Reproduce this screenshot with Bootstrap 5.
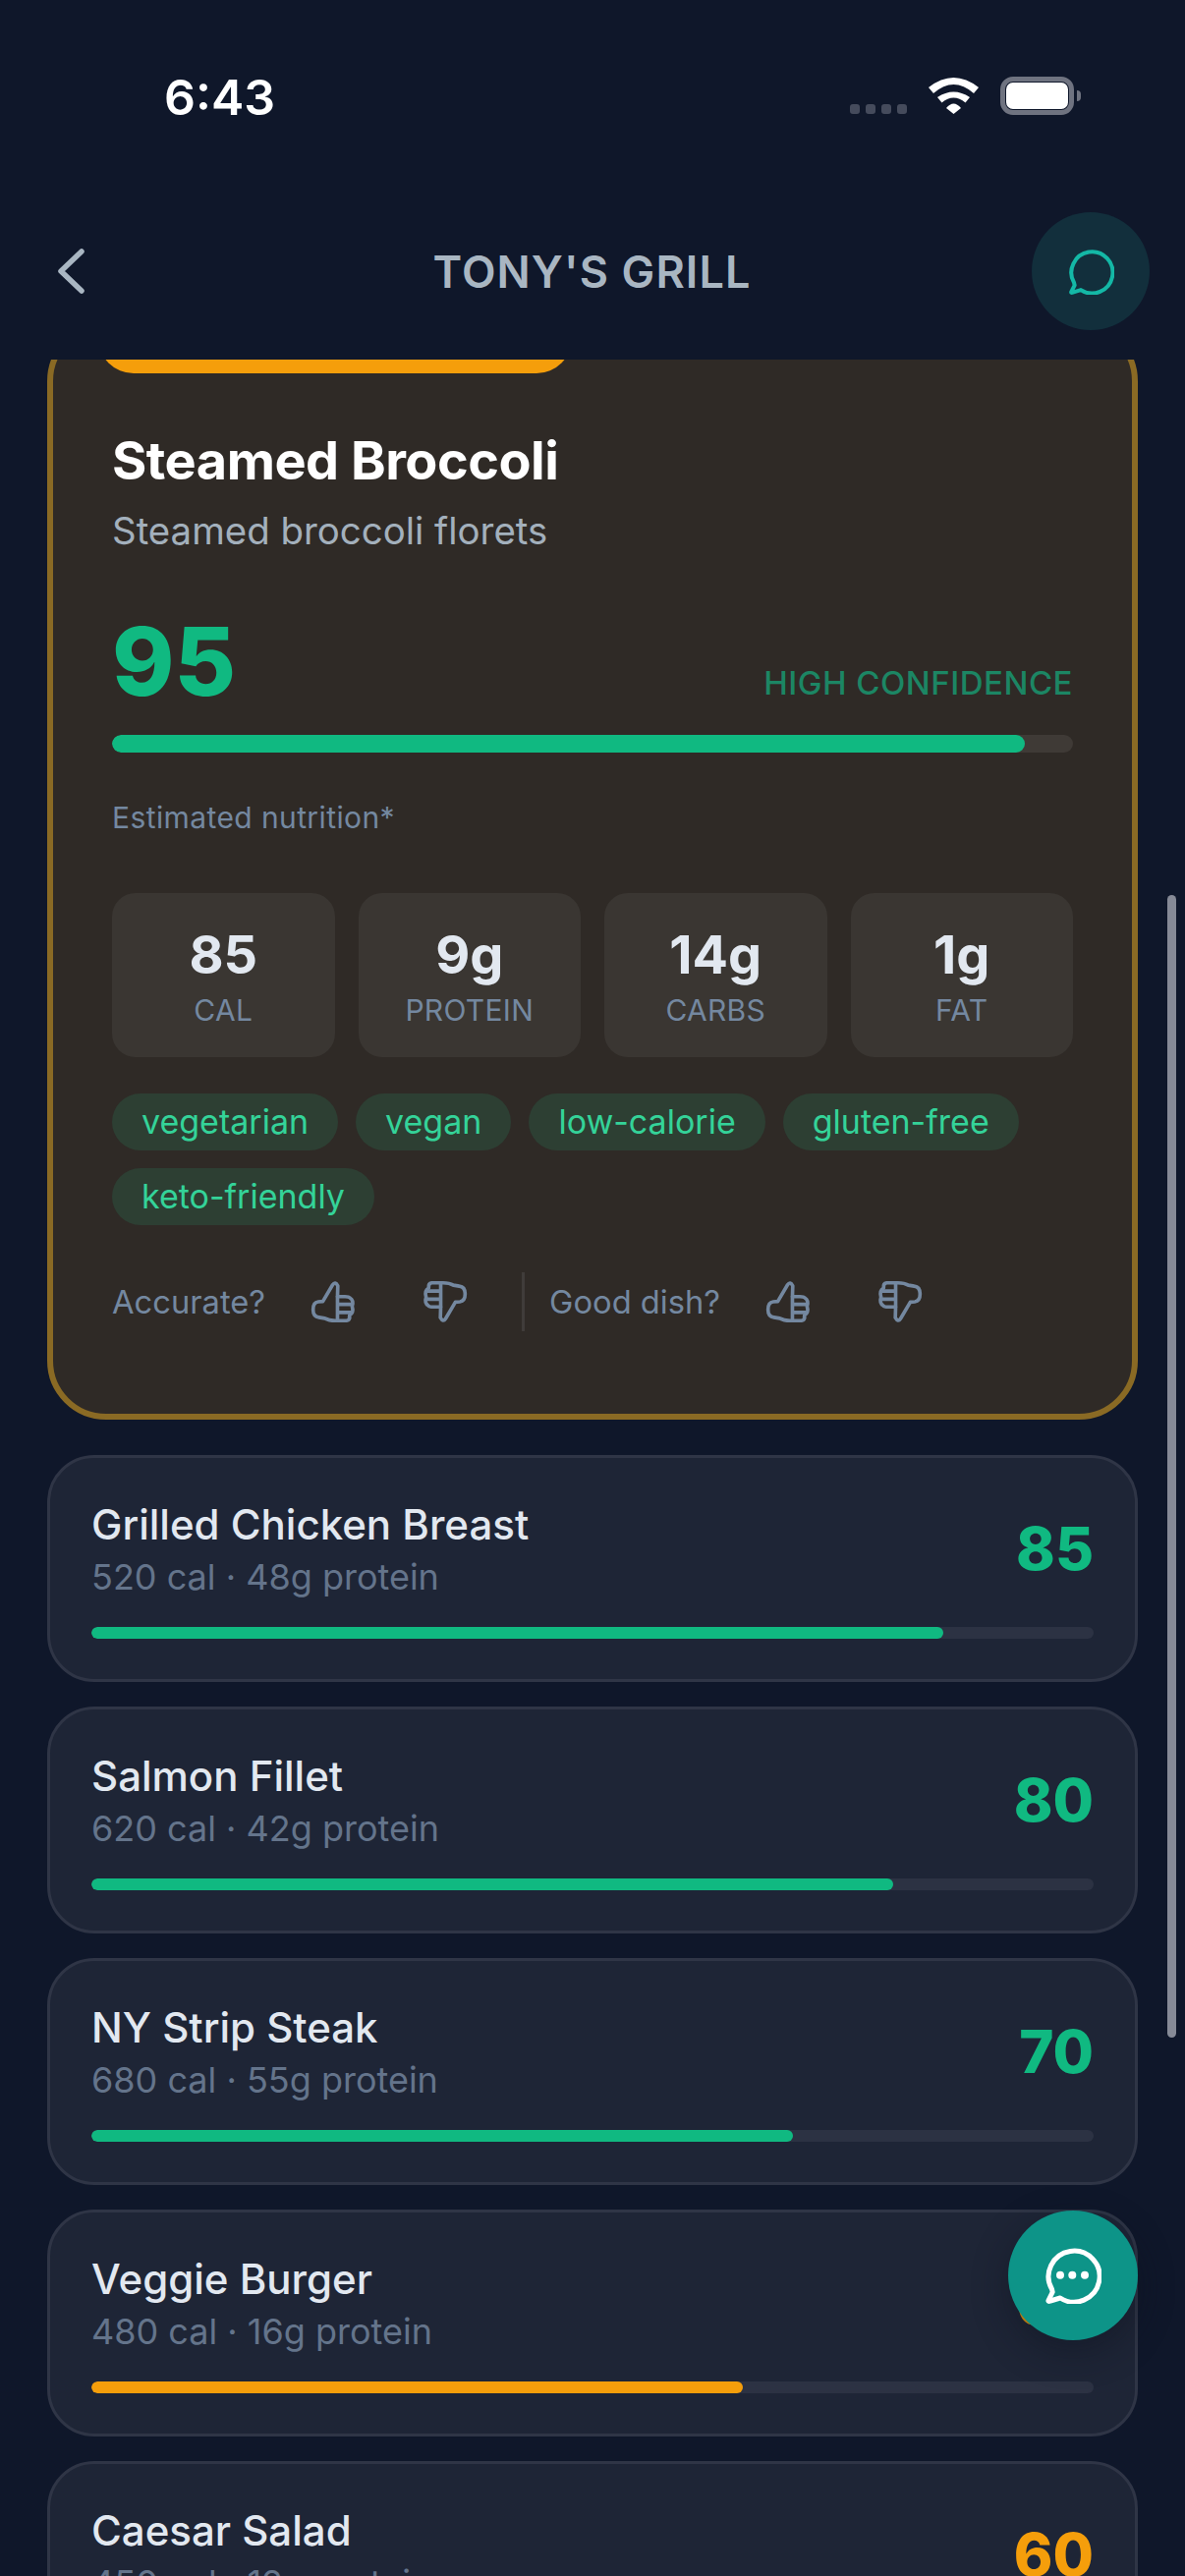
<!DOCTYPE html>
<html lang="en">
<head>
    <meta charset="UTF-8">
    <meta name="viewport" content="width=device-width, initial-scale=1.0">
    <title>Tony's Grill</title>
    <link href="https://cdn.jsdelivr.net/npm/bootstrap@5.3.0/dist/css/bootstrap.min.css" rel="stylesheet">
    <style>
        html, body { height: 100%; }
        body { background-color: #0f172a; font-family: "Inter", "Liberation Sans", sans-serif; overflow: hidden; }
        .phone { height: 2622px; position: relative; overflow: hidden; }

        .status-row { height: 216px; padding: 75px 106px 0 167px; align-items: flex-start; }
        .clock { color: #fff; font-size: 50px; font-weight: 600; line-height: 48px; }
        .status-icons { margin-top: 4px; }
        .sig-dots { gap: 6px; margin-top: 27px; margin-right: 22px; }
        .sig-dots span { width: 10px; height: 10px; border-radius: 3px; background: #454b5c; }
        .batt { width: 75px; height: 39px; border: 5px solid #6f7380; border-radius: 13px; padding: 1px; margin-left: 22px; position: relative; }
        .batt i { display: block; height: 100%; background: #fff; border-radius: 7px; }
        .batt-cap { width: 4px; height: 11px; background: #6f7380; border-radius: 0 4px 4px 0; margin-left: 3px; margin-top: 14px; }
        .batt-wrap { margin-top: -1px; }

        .top-nav { height: 120px; margin-bottom: 30px; padding: 0 36px 0 57px; }
        .nav-title { color: #a9b6c2; font-size: 45px; font-weight: 600; letter-spacing: 1.1px; line-height: 1; flex: 1; text-align: center; padding-left: 68px; }
        .round-chat { width: 120px; height: 120px; border-radius: 50%; background: #122f3c; border: 0; padding: 0; }

        .scroller { height: 2256px; overflow: hidden; padding: 0 48px; }

        .hero { margin-top: -38px; margin-bottom: 36px; position: relative; background: #2f2a26; border: 6px solid #8a6a24; border-radius: 60px; padding: 102px 60px 0; height: 1117px; }
        .hero-flag { position: absolute; top: -6px; left: 46px; width: 482px; height: 52px; background: #f59e0b; border-radius: 0 0 36px 36px; }
        .hero-name { color: #fff; font-size: 54px; font-weight: 700; letter-spacing: -.5px; line-height: 66px; margin: 0; }
        .hero-desc { color: #a3b0bc; font-size: 38.400px; line-height: 48px; margin: 14px 0 0; }
        .hero-score-row { margin-top: 60px; height: 98px; }
        .hero-score { color: #10b981; font-size: 96px; font-weight: 800; line-height: 98px; }
        .hero-conf { color: #1c8664; font-size: 33px; font-weight: 500; letter-spacing: .5px; line-height: 40px; margin-bottom: 7px; }
        .score-track { height: 18px; border-radius: 9px; background: #3f3a36; margin-top: 26px; overflow: hidden; }
        .score-fill { height: 100%; border-radius: 9px; }
        .est-note { color: #7488a0; font-size: 30px; line-height: 36px; letter-spacing: .4px; margin: 48px 0 0; }
        .nutri-row { margin-top: 59px; gap: 24px; }
        .nutri-box { flex: 1; height: 167px; background: #3a3632; border-radius: 24px; text-align: center; padding-top: 30px; }
        .nutri-val { color: #e2e8f0; font-size: 54px; font-weight: 700; line-height: 66px; }
        .nutri-lbl { color: #7488a0; font-size: 30px; line-height: 36px; margin-top: 5px; letter-spacing: .3px; }
        .tag-wrap { margin-top: 37px; gap: 18px; }
        .diet-tag { background: #2d3f33; color: #34d399; font-size: 34px; font-weight: 400; line-height: 58px; height: 58px; padding: 0 30px; border-radius: 29px; }
        .vote-row { margin-top: 48px; height: 60px; }
        .vote-lbl { color: #7488a0; font-size: 32.700px; line-height: 60px; }
        .vote-sep { width: 3px; height: 60px; background: #403c3a; margin: 0 25px 0 55px; }
        .vote-btn { background: none; border: 0; padding: 0; width: 47px; height: 44px; margin-left: 46px; }
        .vote-btn + .vote-btn { margin-left: 66px; }
        .vote-btn svg { display: block; width: 47px; height: 44px; }
        .flip-icon { transform: rotate(180deg); }

        .dish-list { gap: 25px; }
        .dish-item { height: 231px; background: #1e2536; border: 3px solid #2f3546; border-radius: 48px; padding: 41px 42px 0; flex-shrink: 0; }
        .dish-name { color: #e2e8f0; font-size: 42px; font-weight: 500; line-height: 54px; margin: 0; }
        .dish-meta { color: #64748b; font-size: 36px; line-height: 48px; margin: 2px 0 0; }
        .dish-score { font-size: 60px; font-weight: 800; line-height: 70px; margin-top: 16px; }
        .dish-track { height: 12px; border-radius: 6px; background: #2c3243; margin-top: 27px; overflow: hidden; }
        .text-good { color: #10b981; }
        .text-mid { color: #f59e0b; }
        .bg-good { background: #10b981; }
        .bg-mid { background: #f59e0b; }

        .scroll-thumb { position: absolute; left: 1188px; top: 911px; width: 9px; height: 1163px; border-radius: 5px; background: #868a96; }
        .chat-fab { position: absolute; left: 1026px; top: 2250px; width: 132px; height: 132px; border-radius: 50%; background: #0d9488; border: 0; padding: 0; box-shadow: 0 12px 36px rgba(13, 18, 30, .45); }
    </style>
</head>
<body>
    <div class="phone">
        <div class="d-flex justify-content-between status-row">
            <div class="clock">6:43</div>
            <div class="d-flex status-icons">
                <div class="d-flex sig-dots"><span></span><span></span><span></span><span></span></div>
                <svg width="51" height="37" viewBox="0 0 51 37" fill="#fff"><path d="M0 10Q25.500-10 51 10L46 16Q25.500-2 5 16Z"/><path d="M9 20Q25.500 9 42 20L37.500 25.500Q25.500 15.500 13.500 25.500Z"/><path d="M18 31Q25.500 22 33 31L25.500 37Z"/></svg>
                <div class="d-flex batt-wrap">
                    <div class="batt"><i></i></div>
                    <div class="batt-cap"></div>
                </div>
            </div>
        </div>

        <div class="d-flex align-items-center top-nav">
            <svg width="30" height="50" viewBox="0 0 30 50" fill="none" stroke="#a9b6c2" stroke-width="5.500" stroke-linecap="round" stroke-linejoin="round"><path d="M26 5L5 25L26 45"/></svg>
            <div class="nav-title">TONY'S GRILL</div>
            <button class="round-chat d-flex align-items-center justify-content-center" type="button">
                <svg width="47" height="47" viewBox="0 0 58 58" fill="none" stroke="#14b8a6" stroke-width="5" stroke-linejoin="round"><path d="M7.500 43L8.200 46L4 54.500Q3.500 56 6 55L16 52A26 26 0 1 0 7.500 43Z"/></svg>
            </button>
        </div>

        <div class="scroller">
            <div class="hero">
                <div class="hero-flag"></div>
                <h2 class="hero-name">Steamed Broccoli</h2>
                <p class="hero-desc">Steamed broccoli florets</p>
                <div class="d-flex justify-content-between align-items-end hero-score-row">
                    <div class="hero-score">95</div>
                    <div class="hero-conf">HIGH CONFIDENCE</div>
                </div>
                <div class="score-track"><div class="score-fill bg-good" style="width: 95%"></div></div>
                <p class="est-note">Estimated nutrition*</p>
                <div class="d-flex nutri-row">
                    <div class="nutri-box"><div class="nutri-val">85</div><div class="nutri-lbl">CAL</div></div>
                    <div class="nutri-box"><div class="nutri-val">9g</div><div class="nutri-lbl">PROTEIN</div></div>
                    <div class="nutri-box"><div class="nutri-val">14g</div><div class="nutri-lbl">CARBS</div></div>
                    <div class="nutri-box"><div class="nutri-val">1g</div><div class="nutri-lbl">FAT</div></div>
                </div>
                <div class="d-flex flex-wrap tag-wrap">
                    <span class="diet-tag">vegetarian</span>
                    <span class="diet-tag">vegan</span>
                    <span class="diet-tag">low-calorie</span>
                    <span class="diet-tag">gluten-free</span>
                    <span class="diet-tag">keto-friendly</span>
                </div>
                <div class="d-flex align-items-center vote-row">
                    <span class="vote-lbl">Accurate?</span>
                    <button class="vote-btn" type="button"><svg viewBox="74 38 142 132" fill="none" stroke="#7488a0" stroke-width="11" stroke-linejoin="round" stroke-linecap="round"><use href="#thumb"/></svg></button>
                    <button class="vote-btn" type="button"><svg class="flip-icon" viewBox="74 38 142 132" fill="none" stroke="#7488a0" stroke-width="11" stroke-linejoin="round" stroke-linecap="round"><use href="#thumb"/></svg></button>
                    <span class="vote-sep"></span>
                    <span class="vote-lbl">Good dish?</span>
                    <button class="vote-btn" type="button"><svg viewBox="74 38 142 132" fill="none" stroke="#7488a0" stroke-width="11" stroke-linejoin="round" stroke-linecap="round"><use href="#thumb"/></svg></button>
                    <button class="vote-btn" type="button"><svg class="flip-icon" viewBox="74 38 142 132" fill="none" stroke="#7488a0" stroke-width="11" stroke-linejoin="round" stroke-linecap="round"><use href="#thumb"/></svg></button>
                </div>
            </div>

            <div class="d-flex flex-column dish-list">
                <div class="dish-item">
                    <div class="d-flex justify-content-between">
                        <div><h3 class="dish-name">Grilled Chicken Breast</h3><p class="dish-meta">520 cal · 48g protein</p></div>
                        <div class="dish-score text-good">85</div>
                    </div>
                    <div class="dish-track"><div class="score-fill bg-good" style="width: 85%"></div></div>
                </div>
                <div class="dish-item">
                    <div class="d-flex justify-content-between">
                        <div><h3 class="dish-name">Salmon Fillet</h3><p class="dish-meta">620 cal · 42g protein</p></div>
                        <div class="dish-score text-good">80</div>
                    </div>
                    <div class="dish-track"><div class="score-fill bg-good" style="width: 80%"></div></div>
                </div>
                <div class="dish-item">
                    <div class="d-flex justify-content-between">
                        <div><h3 class="dish-name">NY Strip Steak</h3><p class="dish-meta">680 cal · 55g protein</p></div>
                        <div class="dish-score text-good">70</div>
                    </div>
                    <div class="dish-track"><div class="score-fill bg-good" style="width: 70%"></div></div>
                </div>
                <div class="dish-item">
                    <div class="d-flex justify-content-between">
                        <div><h3 class="dish-name">Veggie Burger</h3><p class="dish-meta">480 cal · 16g protein</p></div>
                        <div class="dish-score text-mid">65</div>
                    </div>
                    <div class="dish-track"><div class="score-fill bg-mid" style="width: 65%"></div></div>
                </div>
                <div class="dish-item">
                    <div class="d-flex justify-content-between">
                        <div><h3 class="dish-name">Caesar Salad</h3><p class="dish-meta">450 cal · 12g protein</p></div>
                        <div class="dish-score text-mid">60</div>
                    </div>
                    <div class="dish-track"><div class="score-fill bg-mid" style="width: 60%"></div></div>
                </div>
            </div>
        </div>

        <div class="scroll-thumb"></div>
        <button class="chat-fab d-flex align-items-center justify-content-center" type="button">
            <svg width="58" height="58" viewBox="0 0 58 58" fill="none" stroke="#fff" stroke-width="5" stroke-linejoin="round"><path d="M7.500 43L8.200 46L4 54.500Q3.500 56 6 55L16 52A26 26 0 1 0 7.500 43Z"/><g fill="#fff" stroke="none"><circle cx="16" cy="28.700" r="4"/><circle cx="28.300" cy="28.700" r="4"/><circle cx="41" cy="28.700" r="4"/></g></svg>
        </button>

        <svg width="0" height="0" class="position-absolute">
            <defs>
                <g id="thumb">
                    <path d="M157 88L158 55Q150 40 142 52L112 103L98 104Q82 106 82 128Q82 150 100 152L118 155Q130 162 150 162L185 162Q196 160 194 146Q208 138 202 118Q208 100 195 92Q192 88 180 88Z"/>
                    <path d="M157 88V162M157 112H200M157 137H198"/>
                </g>
            </defs>
        </svg>
    </div>
</body>
</html>
